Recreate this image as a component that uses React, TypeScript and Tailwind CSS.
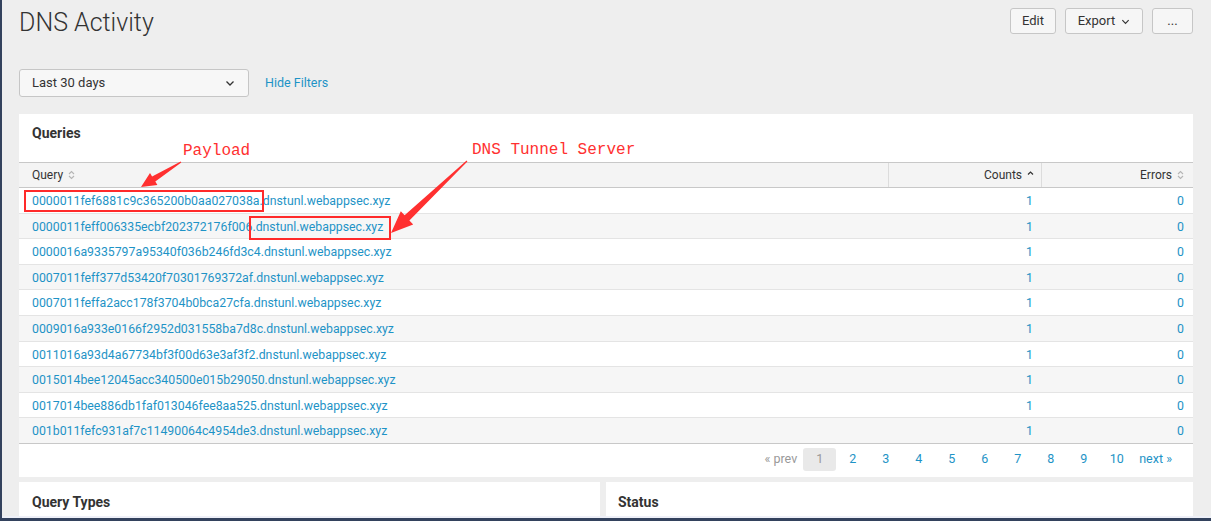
import React from "react";

const rows = [
  "0000011fef6881c9c365200b0aa027038a.dnstunl.webappsec.xyz",
  "0000011feff006335ecbf202372176f006.dnstunl.webappsec.xyz",
  "0000016a9335797a95340f036b246fd3c4.dnstunl.webappsec.xyz",
  "0007011feff377d53420f70301769372af.dnstunl.webappsec.xyz",
  "0007011feffa2acc178f3704b0bca27cfa.dnstunl.webappsec.xyz",
  "0009016a933e0166f2952d031558ba7d8c.dnstunl.webappsec.xyz",
  "0011016a93d4a67734bf3f00d63e3af3f2.dnstunl.webappsec.xyz",
  "0015014bee12045acc340500e015b29050.dnstunl.webappsec.xyz",
  "0017014bee886db1faf013046fee8aa525.dnstunl.webappsec.xyz",
  "001b011fefc931af7c11490064c4954de3.dnstunl.webappsec.xyz",
];

function arrowPoints(tx: number, ty: number, px: number, py: number, headLen: number, headHalf: number, shaftHalf: number, tailHalf: number) {
  const dx = px - tx;
  const dy = py - ty;
  const len = Math.hypot(dx, dy);
  const ux = dx / len;
  const uy = dy / len;
  const nx = -uy;
  const ny = ux;
  const bx = px - ux * headLen;
  const by = py - uy * headLen;
  const pts: [number, number][] = [
    [tx + nx * tailHalf, ty + ny * tailHalf],
    [bx + nx * shaftHalf, by + ny * shaftHalf],
    [bx + nx * headHalf, by + ny * headHalf],
    [px, py],
    [bx - nx * headHalf, by - ny * headHalf],
    [bx - nx * shaftHalf, by - ny * shaftHalf],
    [tx - nx * tailHalf, ty - ny * tailHalf],
  ];
  return pts.map((p) => `${p[0].toFixed(1)},${p[1].toFixed(1)}`).join(" ");
}

function SortBoth() {
  return (
    <svg width="7" height="10" viewBox="0 0 7 10" className="ml-[5px]">
      <path d="M1 4 L3.5 1.5 L6 4" fill="none" stroke="#b5b5b5" strokeWidth="1.1" />
      <path d="M1 6 L3.5 8.5 L6 6" fill="none" stroke="#b5b5b5" strokeWidth="1.1" />
    </svg>
  );
}

function SortUp() {
  return (
    <svg width="7" height="10" viewBox="0 0 7 10" className="ml-[5px]">
      <path d="M1 4.5 L3.5 2 L6 4.5" fill="none" stroke="#333" strokeWidth="1.2" />
    </svg>
  );
}

function Chevron({ size = 10, color = "#333" }: { size?: number; color?: string }) {
  return (
    <svg width={size} height={size} viewBox="0 0 10 10">
      <path d="M1.5 3.5 L5 7 L8.5 3.5" fill="none" stroke={color} strokeWidth="1.3" />
    </svg>
  );
}

export default function App() {
  const pages = ["1", "2", "3", "4", "5", "6", "7", "8", "9", "10"];
  return (
    <div
      className="relative w-[1211px] h-[521px] overflow-hidden bg-[#eeeeee] border-l-2 border-[#33425d] flex flex-col"
      style={{ fontFamily: "Roboto, 'Liberation Sans', sans-serif" }}
    >
      <div className="flex-1 overflow-hidden pl-[17px] pr-[18px]">
        {/* Header */}
        <div className="flex items-start justify-between">
          <h1 className="text-[25px] leading-[34px] font-light text-[#333] mt-[6px]">DNS Activity</h1>
          <div className="flex gap-[9px] mt-[8px]">
            <button className="h-[26px] w-[46px] rounded-[3px] border border-[#c6c6c6] bg-[#f6f6f6] text-[13px] text-[#333]">Edit</button>
            <button className="h-[26px] w-[78px] rounded-[3px] border border-[#c6c6c6] bg-[#f6f6f6] text-[13px] text-[#333] flex items-center justify-center gap-[6px]">
              Export <Chevron size={9} />
            </button>
            <button className="h-[26px] w-[41px] rounded-[3px] border border-[#c6c6c6] bg-[#f6f6f6] text-[13px] text-[#333] leading-none pb-[2px]">...</button>
          </div>
        </div>

        {/* Filters */}
        <div className="flex items-center mt-[29px]">
          <div className="h-[28px] w-[230px] rounded-[3px] border border-[#c6c6c6] bg-[#f7f7f7] flex items-center justify-between pl-[12px] pr-[13px] text-[13px] text-[#333]">
            <span>Last 30 days</span>
            <Chevron size={10} />
          </div>
          <span className="ml-[16px] text-[12.5px] text-[#1e93c6]">Hide Filters</span>
        </div>

        {/* Queries panel */}
        <div className="mt-[17px] bg-white">
          <div className="h-[48px] pl-[13px] pt-[9px] text-[14px] font-bold text-[#333]">Queries</div>
          <div className="grid grid-cols-[870px_153px_151px] h-[26px] bg-[#f4f4f4] border-t border-b border-[#c8c8c8] text-[12px] text-[#333]">
            <div className="flex items-center pl-[13px] border-r border-[#dcdcdc]">
              Query <SortBoth />
            </div>
            <div className="flex items-center justify-end pr-[7px] border-r border-[#dcdcdc]">
              Counts <SortUp />
            </div>
            <div className="flex items-center justify-end pr-[9px]">
              Errors <SortBoth />
            </div>
          </div>
          {rows.map((r, i) => (
            <div
              key={r}
              className={`grid grid-cols-[870px_153px_151px] h-[25.6px] text-[12.3px] text-[#1e93c6] border-b ${i === rows.length - 1 ? "border-[#c8c8c8]" : "border-[#e4e4e4]"} ${i % 2 === 1 ? "bg-[#f6f6f6]" : "bg-white"}`}
            >
              <div className="flex items-center pl-[13px] pt-[2px]">{r}</div>
              <div className="flex items-center justify-end pr-[9px] pt-[2px]">1</div>
              <div className="flex items-center justify-end pr-[9px] pt-[2px]">0</div>
            </div>
          ))}
          <div className="h-[33px] flex items-start justify-end pr-[15px] pt-[4px] text-[12.5px]">
            <span className="h-[23px] flex items-center px-[6px] text-[#999]">« prev</span>
            {pages.map((p) => (
              <span
                key={p}
                className={`h-[23px] w-[33px] flex items-center justify-center rounded-[3px] ${p === "1" ? "bg-[#e9e9e9] text-[#999]" : "text-[#1e93c6]"}`}
              >
                {p}
              </span>
            ))}
            <span className="h-[23px] flex items-center px-[6px] text-[#1e93c6]">next »</span>
          </div>
        </div>

        {/* Bottom panels */}
        <div className="mt-[5px] flex gap-[6px]">
          <div className="w-[581px] h-[60px] bg-white pl-[13px] pt-[10px] text-[14px] font-bold text-[#333]">Query Types</div>
          <div className="flex-1 h-[60px] bg-white pl-[12px] pt-[10px] text-[14px] font-bold text-[#333]">Status</div>
        </div>
      </div>
      <div className="h-[2px] bg-[#eef0f8]" />
      <div className="h-[3px] bg-[#33425d]" />

      {/* Annotations */}
      <div className="absolute left-[22px] top-[190px] w-[240px] h-[22px] border-2 border-[#ff2a2a]" />
      <div className="absolute left-[247px] top-[216px] w-[142px] h-[24px] border-2 border-[#ff2a2a]" />
      <div
        className="absolute left-[181px] top-[141px] text-[16px] leading-[20px] text-[#ff3030]"
        style={{ fontFamily: "'Liberation Mono', monospace" }}
      >
        Payload
      </div>
      <div
        className="absolute left-[470px] top-[140px] text-[16px] leading-[20px] text-[#ff3030]"
        style={{ fontFamily: "'Liberation Mono', monospace" }}
      >
        DNS Tunnel Server
      </div>
      <svg className="absolute left-0 top-0 pointer-events-none" width="1211" height="521" viewBox="0 0 1211 521">
        <polygon points={arrowPoints(179, 162, 139, 187, 15, 7, 3, 0.6)} fill="#ff3030" />
        <polygon points={arrowPoints(465, 161, 389, 233, 22, 9, 3.5, 0.6)} fill="#ff3030" />
      </svg>
    </div>
  );
}
